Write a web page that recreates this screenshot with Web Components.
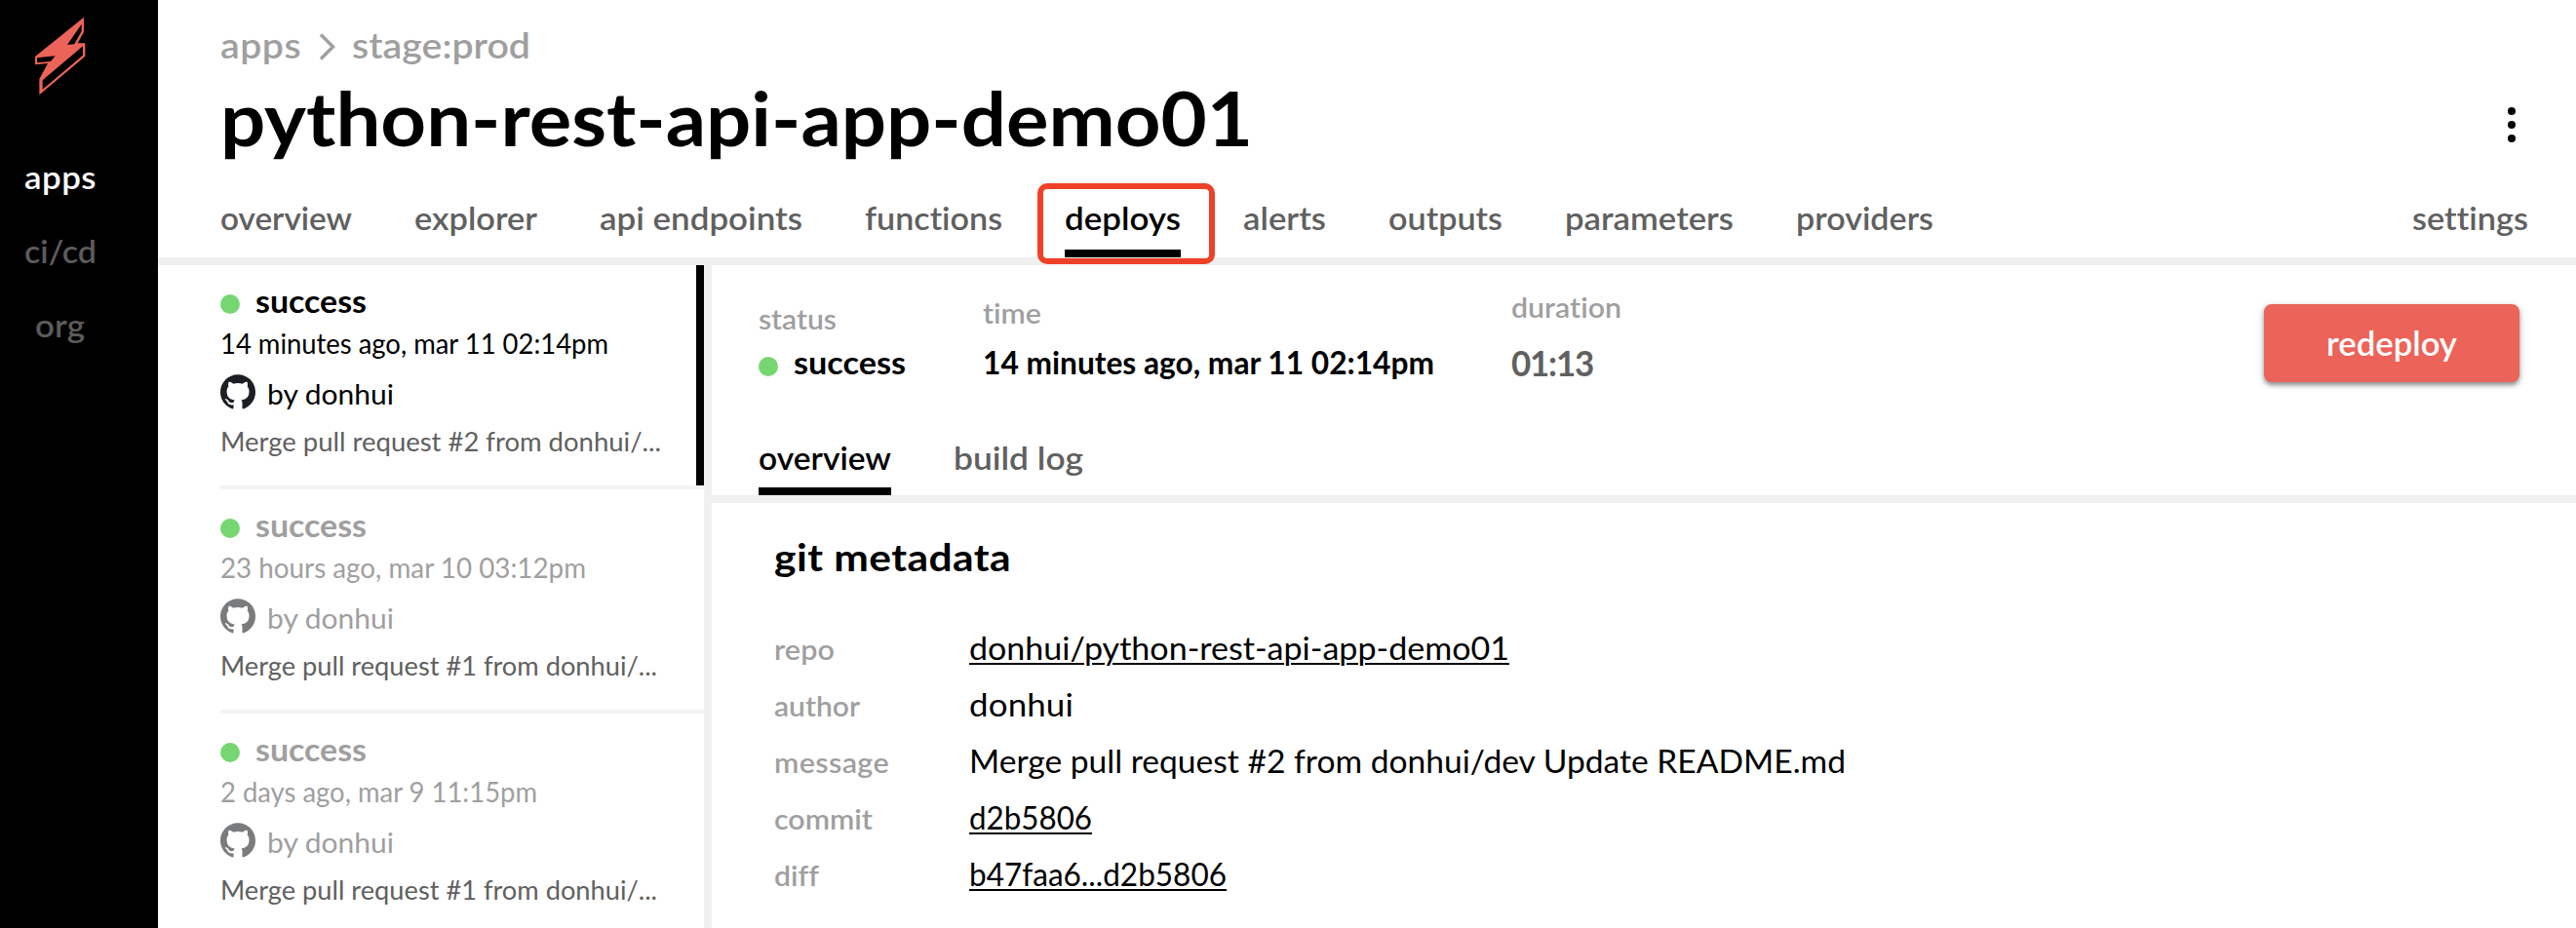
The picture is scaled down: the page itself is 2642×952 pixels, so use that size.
<!DOCTYPE html>
<html lang="en">
<head>
<meta charset="utf-8">
<title>python-rest-api-app-demo01</title>
<style>
html,body{margin:0;height:100%;background:#fff;overflow:hidden}
body{font-family:Lato,"Open Sans",sans-serif;color:#000;font-variant-ligatures:none}
</style>
</head>
<body>
<dash-app></dash-app>
<script>
const define = (name, html, setup) => customElements.define(name, class extends HTMLElement {
  connectedCallback() {
    if (this.shadowRoot) return;
    const t = document.createElement('template');
    t.innerHTML = typeof html === 'function' ? html(this) : html;
    this.attachShadow({ mode: 'open' }).append(t.content.cloneNode(true));
    if (setup) setup(this);
  }
});

/* A single line of text that fills the width given in "w": the glyphs are
   widened by up to 9%, and tracking takes up what is left. */
define('track-text', el => `
<style>
:host{display:block;white-space:nowrap;line-height:40px;flex:none;width:${el.getAttribute('w')}px}
span{display:inline-block;transform-origin:0 50%}
:host([link]) span{text-decoration:underline;text-decoration-thickness:2px;text-underline-offset:3px}
</style><span><slot></slot></span>`, el => {
  const span = el.shadowRoot.querySelector('span');
  const target = +el.getAttribute('w');
  const natural = span.getBoundingClientRect().width;
  const scale = Math.min(1.09, Math.max(0.97, target / natural));
  span.style.letterSpacing = ((target / scale - natural) / el.textContent.length) + 'px';
  span.style.transform = `scaleX(${scale})`;
});

define('status-dot', `<style>:host{display:block;flex:none;width:20px;height:20px;border-radius:50%;background:#76d672}</style>`);

define('brand-logo', `
<style>:host{display:block;width:72px;height:100px}svg{display:block}</style>
<svg width="72" height="100" viewBox="0 0 216 300"><path fill="#ec6359" fill-rule="evenodd" d="M180 29V74L161 109H184V149L43 268V219L69 171L30 175V150ZM173 50L129 114L151 112L173 72ZM36 154V169L78 165L92 148ZM177 118L53 223V251L177 146Z"/></svg>`);

define('github-mark', `
<style>:host{display:block;flex:none;width:36px;height:36px}svg{display:block}</style>
<svg width="36" height="36" viewBox="0 0 16 15.7"><path fill="currentColor" d="M8 0C3.58 0 0 3.58 0 8c0 3.54 2.29 6.53 5.47 7.59.4.07.55-.17.55-.38 0-.19-.01-.82-.01-1.49-2.01.37-2.53-.49-2.69-.94-.09-.23-.48-.94-.82-1.13-.28-.15-.68-.52-.01-.53.63-.01 1.08.58 1.23.82.72 1.21 1.87.87 2.33.66.07-.52.28-.87.51-1.07-1.78-.2-3.64-.89-3.64-3.95 0-.87.31-1.59.82-2.15-.08-.2-.36-1.02.08-2.12 0 0 .67-.21 2.2.82.64-.18 1.32-.27 2-.27s1.36.09 2 .27c1.53-1.04 2.2-.82 2.2-.82.44 1.1.16 1.92.08 2.12.51.56.82 1.27.82 2.15 0 3.07-1.87 3.75-3.65 3.95.29.25.54.73.54 1.48 0 1.07-.01 1.93-.01 2.2 0 .21.15.46.55.38A8.01 8.01 0 0 0 16 8c0-4.42-3.58-8-8-8z"/></svg>`);

define('side-nav', `
<style>
:host{display:flex;flex-direction:column;width:162px;flex:none;background:#000;color:#5b5b5b;font-size:32px;font-weight:600}
brand-logo{margin:8px 0 54px 26px}
nav{display:flex;flex-direction:column;gap:36px;padding-left:25px}
.on{color:#fff}.org{margin-left:11px}
</style>
<brand-logo></brand-logo>
<nav><track-text class="on" w="74">apps</track-text><track-text w="74">ci/cd</track-text><track-text class="org" w="51">org</track-text></nav>`);

define('nav-tab', el => `
<style>
:host{display:flex;flex-direction:column;justify-content:space-between;height:60px;position:relative;color:#606060;font-size:32.5px;font-weight:600}
i{display:block;height:8px}
:host([active]){color:#000}
:host([active]) i{background:#000}
:host([marked])::after{content:"";position:absolute;box-sizing:border-box;left:-28px;top:-16px;width:181.5px;height:83px;border:6px solid #ef4128;border-radius:10px;z-index:2}
</style>
<track-text w="${el.getAttribute('w')}">${el.getAttribute('label')}</track-text><i></i>`);

define('page-header', `
<style>
:host{display:block;height:264px;border-bottom:8px solid #f0f0f0;padding:0 49px 0 64px}
.crumbs{display:flex;padding-top:26px;height:40px;color:#9f9f9f;font-size:36px;font-weight:600}
.crumbs svg{display:block;margin:8px 16px 0 18px}
.title{display:flex;justify-content:space-between;height:100px}
h1{margin:0;font-size:76px;font-weight:700}
h1 track-text{line-height:110px}
.kebab{display:flex;flex-direction:column;gap:6px;margin:44px 13px 0 0}
.kebab b{width:8px;height:8px;border-radius:50%;background:#000}
.tabs{display:flex;gap:64px;padding-top:38px}
.tabs :last-child{margin-left:auto}
</style>
<div class="crumbs"><track-text w="83">apps</track-text><svg width="18" height="28" viewBox="0 0 18 28" fill="none" stroke="#9f9f9f" stroke-width="3.500"><path d="M2 1.5L14.500 14L2 26.500"/></svg><track-text w="183">stage:prod</track-text></div>
<div class="title"><h1><track-text w="1059">python-rest-api-app-demo01</track-text></h1><div class="kebab"><b></b><b></b><b></b></div></div>
<div class="tabs">
<nav-tab w="135" label="overview"></nav-tab><nav-tab w="126" label="explorer"></nav-tab><nav-tab w="208" label="api endpoints"></nav-tab><nav-tab w="141" label="functions"></nav-tab><nav-tab w="119" label="deploys" active marked></nav-tab><nav-tab w="85" label="alerts"></nav-tab><nav-tab w="117" label="outputs"></nav-tab><nav-tab w="173" label="parameters"></nav-tab><nav-tab w="141" label="providers"></nav-tab><nav-tab w="119" label="settings"></nav-tab>
</div>`);

define('deploy-item', el => `
<style>
:host{display:block;box-sizing:border-box;height:230px;margin-left:64px;border-bottom:4px solid #f4f4f4;color:#9f9f9f;padding-top:17px;font-size:28px}
:host([active]){color:#000;background:linear-gradient(#000,#000) right top/8px 226px no-repeat}
.status{display:flex;align-items:center;gap:16px;height:40px;font-size:32px;font-weight:700}
.status status-dot{margin-top:6px}
.when{margin-top:3px}
.by{display:flex;gap:12px;height:40px;margin-top:12px}
github-mark{color:#7a7b7d}
:host([active]) github-mark{color:#1b1f23}
.msg{color:#606060;font-size:27px;margin-top:9px}
</style>
<div class="status"><status-dot></status-dot><track-text w="114">success</track-text></div>
<track-text class="when" w="${el.getAttribute('when-w')}">${el.getAttribute('when')}</track-text>
<div class="by"><github-mark></github-mark><track-text w="130">by donhui</track-text></div>
<track-text class="msg" w="${el.getAttribute('msg-w')}">${el.getAttribute('msg')}</track-text>`);

define('deploy-list', `
<style>:host{display:block;width:560px;flex:none;border-right:8px solid #f0f0f0;overflow:hidden}</style>
<deploy-item active when="14 minutes ago, mar 11 02:14pm" when-w="398" msg="Merge pull request #2 from donhui/..." msg-w="452"></deploy-item>
<deploy-item when="23 hours ago, mar 10 03:12pm" when-w="375" msg="Merge pull request #1 from donhui/..." msg-w="448"></deploy-item>
<deploy-item when="2 days ago, mar 9 11:15pm" when-w="325" msg="Merge pull request #1 from donhui/..." msg-w="448"></deploy-item>`);

define('deploy-summary', `
<style>
:host{display:flex;align-items:flex-start;height:172px;padding:0 58px 0 48px}
.col{display:flex;flex-direction:column}
.k{color:#9f9f9f;font-size:28px;font-weight:600}
.v{display:flex;align-items:center;gap:16px;font-size:32px;font-weight:700}
.c1{margin-top:35px;width:230px}.c1 .v{margin-top:5px}
.c2{margin-top:29px;width:542px}.c2 .v{margin-top:11px}
.c3{margin-top:23px}.c3 .v{margin-top:17px;font-size:36px;color:#606060}
status-dot{margin-top:7px}
button{all:unset;margin:40px 0 0 auto;box-sizing:border-box;width:262px;height:80px;padding:0 0 0 64px;display:flex;align-items:center;border-radius:8px;background:#ec6359;color:#fff;font-size:34px;font-weight:600;box-shadow:0 3px 4px rgba(0,0,0,.38),0 2px 10px rgba(0,0,0,.14)}
</style>
<div class="col c1"><track-text class="k" w="80">status</track-text><div class="v"><status-dot></status-dot><track-text w="115">success</track-text></div></div>
<div class="col c2"><track-text class="k" w="60">time</track-text><div class="v"><track-text w="463">14 minutes ago, mar 11 02:14pm</track-text></div></div>
<div class="col c3"><track-text class="k" w="113">duration</track-text><div class="v"><track-text w="84">01:13</track-text></div></div>
<button><track-text w="134">redeploy</track-text></button>`);

define('meta-row', el => `
<style>
:host{display:grid;grid-template-columns:200px auto;height:58px}
.k{color:#9f9f9f;font-size:28px;font-weight:600;padding-top:1px}
.v{font-size:32px}
</style>
<track-text class="k" w="${el.getAttribute('kw')}">${el.getAttribute('k')}</track-text>
<track-text class="v" w="${el.getAttribute('vw')}" ${el.hasAttribute('link') ? 'link' : ''}>${el.getAttribute('v')}</track-text>`);

define('deploy-detail', `
<style>
:host{display:block;flex:1}
.tabs{display:flex;gap:64px;height:64px;padding-left:48px;border-bottom:8px solid #f0f0f0}
.tabs nav-tab{box-sizing:border-box;height:64px;padding-top:6px}
section{padding:35px 0 0 64px}
h2{margin:0 0 54px;font-size:39px;font-weight:700}
</style>
<deploy-summary></deploy-summary>
<div class="tabs"><nav-tab w="136" label="overview" active></nav-tab><nav-tab w="133" label="build log"></nav-tab></div>
<section>
<h2><track-text w="243">git metadata</track-text></h2>
<meta-row k="repo" kw="62" v="donhui/python-rest-api-app-demo01" vw="554" link></meta-row>
<meta-row k="author" kw="88" v="donhui" vw="107"></meta-row>
<meta-row k="message" kw="118" v="Merge pull request #2 from donhui/dev Update README.md" vw="899"></meta-row>
<meta-row k="commit" kw="101" v="d2b5806" vw="126" link></meta-row>
<meta-row k="diff" kw="46" v="b47faa6...d2b5806" vw="264" link></meta-row>
</section>`);

define('dash-app', `
<style>
:host{display:flex;width:2642px;height:952px;overflow:hidden;background:#fff}
main{flex:1;display:flex;flex-direction:column;min-width:0}
.body{display:flex;flex:1;min-height:0;overflow:hidden}
page-header{box-sizing:border-box;height:272px;flex:none}
</style>
<side-nav></side-nav>
<main><page-header></page-header><div class="body"><deploy-list></deploy-list><deploy-detail></deploy-detail></div></main>`);
</script>
</body>
</html>
